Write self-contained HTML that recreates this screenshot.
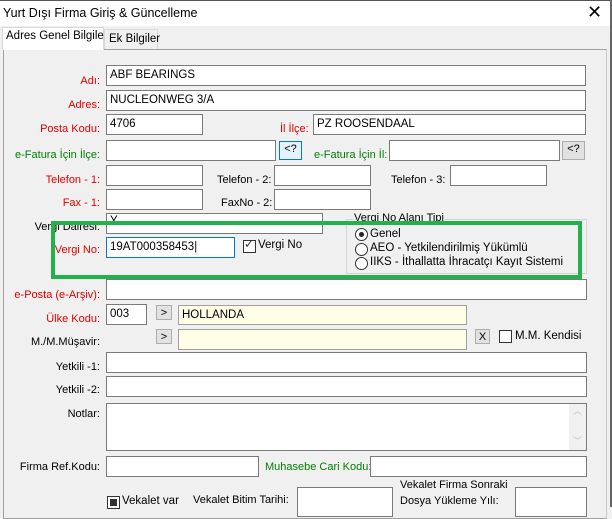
<!DOCTYPE html><html><head><meta charset="utf-8"><style>
body{margin:0;width:612px;height:507px;overflow:hidden;background:#f0f0f0;font-family:"Liberation Sans",Arial,sans-serif;font-size:11px;color:#000;position:relative}
div,span{position:absolute;box-sizing:border-box}
.i{background:#fff;border:1px solid #7a7a7a;height:21px;padding:3px 3px;font-size:11.5px;white-space:nowrap}
.l{text-align:right;white-space:nowrap;line-height:13px}
.r{color:#e00000}.g{color:#008000}
.b{background:#e1e1e1;border:1px solid #adadad;text-align:center;font-size:11px;line-height:14px}
.y{background:#ffffe8;border:1px solid #a0a0a0;padding:3px 3px;font-size:11.5px}
.cb{width:13px;height:13px;border:1px solid #333;background:#fff}
.rd{width:13px;height:13px;border:1px solid #333;border-radius:50%;background:#fff}
</style></head><body>
<div style="left:0;top:0;width:612px;height:26px;background:#fff;border-top:1px solid #555"></div>
<span style="left:3px;top:6px;font-size:12.5px">Yurt Dışı Firma Giriş &amp; Güncelleme</span>
<span style="left:587px;top:2px;font-size:18px;line-height:20px;font-weight:300">✕</span>
<div style="left:610px;top:0;width:2px;height:507px;background:#666"></div>
<div style="left:3px;top:49px;width:604px;height:470px;border:1px solid #a0a0a0;border-right-color:#c8c8c8"></div>
<div style="left:2px;top:27px;width:102px;height:23px;background:#fff;border:1px solid #d9d9d9;border-bottom:none"></div>
<span style="left:6px;top:30px;font-size:11.5px">Adres Genel Bilgiler</span>
<div style="left:104px;top:29px;width:54px;height:20px;background:#f0f0f0;border:1px solid #d9d9d9;border-bottom:none"></div>
<span style="left:109px;top:33px;font-size:11.5px">Ek Bilgiler</span>

<span class="l r" style="right:512px;top:75px">Adı:</span>
<div class="i" style="left:106px;top:65px;width:480px">ABF BEARINGS</div>
<span class="l r" style="right:512px;top:99px">Adres:</span>
<div class="i" style="left:106px;top:90px;width:480px">NUCLEONWEG 3/A</div>
<span class="l r" style="right:512px;top:123px">Posta Kodu:</span>
<div class="i" style="left:106px;top:114px;width:97px">4706</div>
<span class="l r" style="left:280px;top:123px">İl İlçe:</span>
<div class="i" style="left:313px;top:114px;width:273px">PZ ROOSENDAAL</div>

<span class="l g" style="right:512px;top:149px">e-Fatura İçin İlçe:</span>
<div class="i" style="left:106px;top:140px;width:170px"></div>
<div class="b" style="left:279px;top:141px;width:23px;height:19px;border-color:#0078d7;background:#e5f1fb">&lt;?</div>
<span class="l g" style="left:314px;top:149px">e-Fatura İçin İl:</span>
<div class="i" style="left:389px;top:140px;width:171px"></div>
<div class="b" style="left:562px;top:141px;width:23px;height:19px">&lt;?</div>

<span class="l r" style="right:512px;top:174px">Telefon - 1:</span>
<div class="i" style="left:106px;top:165px;width:97px"></div>
<span class="l" style="left:217px;top:174px">Telefon - 2:</span>
<div class="i" style="left:274px;top:165px;width:97px"></div>
<span class="l" style="left:391px;top:174px">Telefon - 3:</span>
<div class="i" style="left:450px;top:165px;width:97px"></div>

<span class="l r" style="right:512px;top:197px">Fax - 1:</span>
<div class="i" style="left:106px;top:189px;width:97px"></div>
<span class="l" style="left:221px;top:197px">FaxNo - 2:</span>
<div class="i" style="left:274px;top:189px;width:97px"></div>

<span class="l" style="right:512px;top:221px">Vergi Dairesi:</span>
<div class="i" style="left:106px;top:213px;width:217px;padding-top:1px">Y</div>
<span class="l r" style="right:512px;top:244px">Vergi No:</span>
<div class="i" style="left:106px;top:237px;width:129px;border-color:#0078d7">19AT000358453|</div>
<div class="cb" style="left:243px;top:240px;border-color:#333"></div>
<span style="left:244px;top:237px;font-size:12px;color:#333">✓</span>
<span style="left:258px;top:239px;font-size:11.5px">Vergi No</span>

<div style="left:346px;top:219px;width:241px;height:55px;border:1px solid #d5d5d5"></div>
<span style="left:353px;top:212px;background:#f0f0f0;padding:0 1px">Vergi No Alanı Tipi</span>
<div class="rd" style="left:355px;top:228px"></div><div style="left:359px;top:232px;width:5px;height:5px;border-radius:50%;background:#222"></div>
<span style="left:370px;top:228px;font-size:11.5px">Genel</span>
<div class="rd" style="left:355px;top:243px"></div>
<span style="left:370px;top:242px;font-size:11.5px">AEO - Yetkilendirilmiş Yükümlü</span>
<div class="rd" style="left:355px;top:257px"></div>
<span style="left:370px;top:256px;font-size:11.5px">IIKS - İthallatta İhracatçı Kayıt Sistemi</span>

<div style="left:51px;top:221px;width:531px;height:58px;border:4px solid #22b14c"></div>

<span class="l r" style="right:512px;top:289px">e-Posta (e-Arşiv):</span>
<div class="i" style="left:106px;top:279px;width:481px"></div>
<span class="l r" style="right:512px;top:313px">Ülke Kodu:</span>
<div class="i" style="left:106px;top:304px;width:41px">003</div>
<div class="b" style="left:156px;top:305px;width:16px;height:15px">&gt;</div>
<div class="y" style="left:178px;top:305px;width:289px;height:20px">HOLLANDA</div>
<span class="l" style="right:512px;top:336px">M./M.Müşavir:</span>
<div class="b" style="left:156px;top:329px;width:16px;height:15px">&gt;</div>
<div class="y" style="left:178px;top:329px;width:289px;height:21px"></div>
<div class="b" style="left:475px;top:329px;width:15px;height:15px">X</div>
<div class="cb" style="left:499px;top:330px"></div>
<span style="left:515px;top:330px;font-size:11.5px">M.M. Kendisi</span>

<span class="l" style="right:512px;top:361px">Yetkili -1:</span>
<div class="i" style="left:106px;top:352px;width:481px"></div>
<span class="l" style="right:512px;top:384px">Yetkili -2:</span>
<div class="i" style="left:106px;top:376px;width:481px"></div>
<span class="l" style="right:512px;top:408px">Notlar:</span>
<div class="i" style="left:106px;top:403px;width:481px;height:48px"></div>
<div style="left:569px;top:404px;width:17px;height:46px;background:#f0f0f0;color:#bbb;font-size:9px;text-align:center;line-height:15px">︿<br><br>﹀</div>
<span class="l" style="right:512px;top:461px">Firma Ref.Kodu:</span>
<div class="i" style="left:106px;top:456px;width:153px"></div>
<span class="l g" style="left:265px;top:461px">Muhasebe Cari Kodu:</span>
<div class="i" style="left:370px;top:456px;width:217px"></div>

<div class="cb" style="left:107px;top:496px"></div><div style="left:110px;top:499px;width:7px;height:7px;background:#333"></div>
<span style="left:122px;top:495px;font-size:11.5px">Vekalet var</span>
<span style="left:193px;top:494px">Vekalet Bitim Tarihi:</span>
<div class="i" style="left:297px;top:487px;width:96px;height:30px"></div>
<span style="left:400px;top:479px">Vekalet Firma Sonraki</span>
<span style="left:400px;top:495px">Dosya Yükleme Yılı:</span>
<div class="i" style="left:515px;top:487px;width:72px;height:30px"></div>
</body></html>
